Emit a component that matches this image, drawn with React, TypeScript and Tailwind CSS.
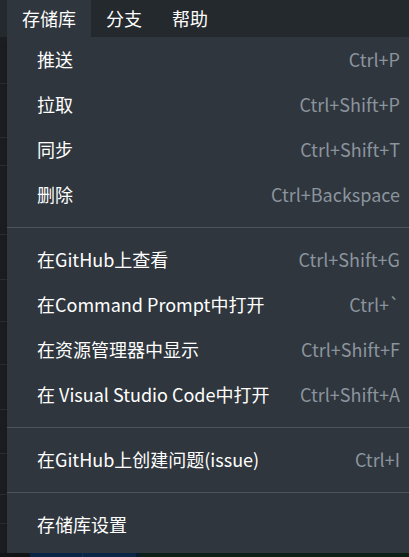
import React from 'react'

type Item = { label: string; shortcut?: string } | 'sep'

const items: Item[] = [
  { label: '推送', shortcut: 'Ctrl+P' },
  { label: '拉取', shortcut: 'Ctrl+Shift+P' },
  { label: '同步', shortcut: 'Ctrl+Shift+T' },
  { label: '删除', shortcut: 'Ctrl+Backspace' },
  'sep',
  { label: '在GitHub上查看', shortcut: 'Ctrl+Shift+G' },
  { label: '在Command Prompt中打开', shortcut: 'Ctrl+`' },
  { label: '在资源管理器中显示', shortcut: 'Ctrl+Shift+F' },
  { label: '在 Visual Studio Code中打开', shortcut: 'Ctrl+Shift+A' },
  'sep',
  { label: '在GitHub上创建问题(issue)', shortcut: 'Ctrl+I' },
  'sep',
  { label: '存储库设置' },
]

// rows of the app list that peek out behind the menu on the left
const behindRows = [47, 54, 28, 69, 45, 42, 43, 45, 44, 41, 29, 66]

export default function App() {
  return (
    <div
      className="relative w-[409px] h-[557px] overflow-hidden bg-[#1b1d20] text-[18px]"
      style={{ fontFamily: '"Noto Sans CJK SC", "Noto Sans", sans-serif' }}
    >
      {/* top bar */}
      <div className="h-[37px] bg-[#24292e] flex pl-[7px]">
        <div className="px-[15px] bg-[#2f363d] text-white flex items-center">存储库</div>
        <div className="px-[15px] text-white flex items-center">分支</div>
        <div className="px-[15px] text-white flex items-center">帮助</div>
      </div>

      {/* app content behind */}
      <div className="flex flex-col w-[7px]">
        {behindRows.map((h, i) => (
          <div key={i} style={{ height: h }} className="border-b border-[#2a2d31]" />
        ))}
      </div>

      {/* bottom strip */}
      <div className="absolute left-0 right-0 bottom-0 h-[4px] flex">
        <div className="w-[30px] bg-[#151618]" />
        <div className="w-[52px] bg-[#0c2a4d]" />
        <div className="w-[54px] bg-[#0d2b4f] border-l border-[#133a66]" />
        <div className="w-[5px] bg-[#0a1e33]" />
        <div className="flex-1 bg-[#0f2419]" />
      </div>

      {/* dropdown menu */}
      <div className="absolute left-[7px] top-[37px] w-[402px] bg-[#2f363d] pb-[6px] shadow-lg">
        {items.map((it, i) =>
          it === 'sep' ? (
            <div key={i} className="h-[20px] flex items-center">
              <div className="h-px w-full bg-[#4a525a]" />
            </div>
          ) : (
            <div key={i} className="h-[45px] flex items-center justify-between pl-[30px] pr-[9px]">
              <span className="text-white">{it.label}</span>
              {it.shortcut && <span className="text-[#8b949e]">{it.shortcut}</span>}
            </div>
          )
        )}
      </div>
    </div>
  )
}
